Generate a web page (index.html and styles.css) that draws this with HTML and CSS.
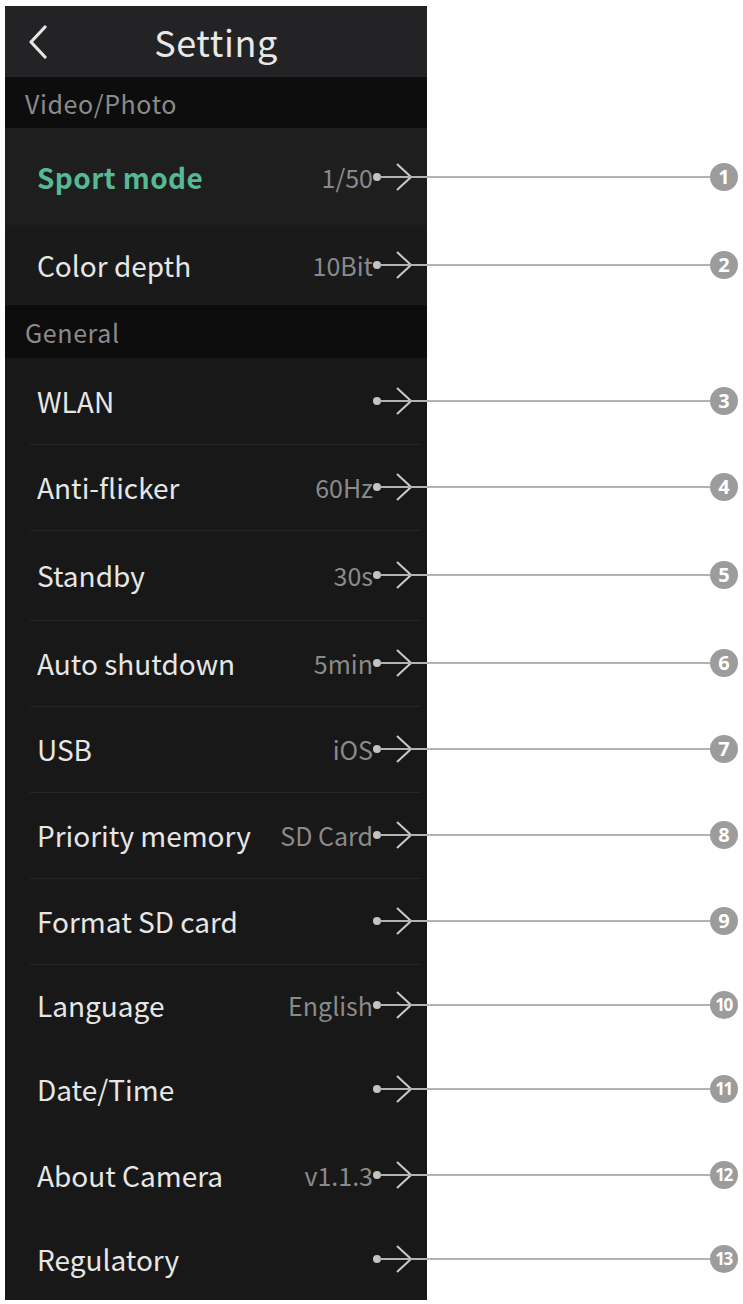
FILE: index.html
```html
<!DOCTYPE html>
<html lang="en">
<head>
<meta charset="utf-8">
<title>Setting</title>
<link rel="stylesheet" href="styles.css">
</head>
<body>
<div class="page">
  <div class="panel-head">
    <div class="back">
      <svg width="22" height="34" viewBox="0 0 22 34"><path d="M18 2 L4 17 L18 32" fill="none" stroke="#e6e6e6" stroke-width="3.2" stroke-linecap="round" stroke-linejoin="round"/></svg>
    </div>
    <div class="title">Setting</div>
    <div></div>
  </div>

  <div class="section"><span>Video/Photo</span></div>

  <div class="row sport">
    <div class="cell"><span class="label active">Sport mode</span><span class="value">1/50</span><svg class="chev" viewBox="0 0 16 28"><path d="M1 1 L15 14 L1 27" fill="none" stroke="#c9c9c9" stroke-width="2"/></svg></div>
    <div class="callout"><i class="dot"></i><i class="line"></i><b class="num">1</b></div>
  </div>
  <div class="row depth">
    <div class="cell"><span class="label">Color depth</span><span class="value">10Bit</span><svg class="chev" viewBox="0 0 16 28"><path d="M1 1 L15 14 L1 27" fill="none" stroke="#c9c9c9" stroke-width="2"/></svg></div>
    <div class="callout"><i class="dot"></i><i class="line"></i><b class="num">2</b></div>
  </div>

  <div class="section general"><span>General</span></div>

  <div class="row">
    <div class="cell"><span class="label">WLAN</span><span class="value"></span><svg class="chev" viewBox="0 0 16 28"><path d="M1 1 L15 14 L1 27" fill="none" stroke="#c9c9c9" stroke-width="2"/></svg></div>
    <div class="callout"><i class="dot"></i><i class="line"></i><b class="num">3</b></div>
  </div>
  <div class="row sep">
    <div class="cell"><span class="label">Anti-flicker</span><span class="value">60Hz</span><svg class="chev" viewBox="0 0 16 28"><path d="M1 1 L15 14 L1 27" fill="none" stroke="#c9c9c9" stroke-width="2"/></svg></div>
    <div class="callout"><i class="dot"></i><i class="line"></i><b class="num">4</b></div>
  </div>
  <div class="row sep tall">
    <div class="cell"><span class="label">Standby</span><span class="value">30s</span><svg class="chev" viewBox="0 0 16 28"><path d="M1 1 L15 14 L1 27" fill="none" stroke="#c9c9c9" stroke-width="2"/></svg></div>
    <div class="callout"><i class="dot"></i><i class="line"></i><b class="num">5</b></div>
  </div>
  <div class="row sep">
    <div class="cell"><span class="label">Auto shutdown</span><span class="value">5min</span><svg class="chev" viewBox="0 0 16 28"><path d="M1 1 L15 14 L1 27" fill="none" stroke="#c9c9c9" stroke-width="2"/></svg></div>
    <div class="callout"><i class="dot"></i><i class="line"></i><b class="num">6</b></div>
  </div>
  <div class="row sep">
    <div class="cell"><span class="label">USB</span><span class="value">iOS</span><svg class="chev" viewBox="0 0 16 28"><path d="M1 1 L15 14 L1 27" fill="none" stroke="#c9c9c9" stroke-width="2"/></svg></div>
    <div class="callout"><i class="dot"></i><i class="line"></i><b class="num">7</b></div>
  </div>
  <div class="row sep">
    <div class="cell"><span class="label">Priority memory</span><span class="value">SD Card</span><svg class="chev" viewBox="0 0 16 28"><path d="M1 1 L15 14 L1 27" fill="none" stroke="#c9c9c9" stroke-width="2"/></svg></div>
    <div class="callout"><i class="dot"></i><i class="line"></i><b class="num">8</b></div>
  </div>
  <div class="row sep">
    <div class="cell"><span class="label">Format SD card</span><span class="value"></span><svg class="chev" viewBox="0 0 16 28"><path d="M1 1 L15 14 L1 27" fill="none" stroke="#c9c9c9" stroke-width="2"/></svg></div>
    <div class="callout"><i class="dot"></i><i class="line"></i><b class="num">9</b></div>
  </div>
  <div class="row sep short">
    <div class="cell"><span class="label">Language</span><span class="value">English</span><svg class="chev" viewBox="0 0 16 28"><path d="M1 1 L15 14 L1 27" fill="none" stroke="#c9c9c9" stroke-width="2"/></svg></div>
    <div class="callout"><i class="dot"></i><i class="line"></i><b class="num two">10</b></div>
  </div>
  <div class="row">
    <div class="cell"><span class="label">Date/Time</span><span class="value"></span><svg class="chev" viewBox="0 0 16 28"><path d="M1 1 L15 14 L1 27" fill="none" stroke="#c9c9c9" stroke-width="2"/></svg></div>
    <div class="callout"><i class="dot"></i><i class="line"></i><b class="num two">11</b></div>
  </div>
  <div class="row">
    <div class="cell"><span class="label">About Camera</span><span class="value">v1.1.3</span><svg class="chev" viewBox="0 0 16 28"><path d="M1 1 L15 14 L1 27" fill="none" stroke="#c9c9c9" stroke-width="2"/></svg></div>
    <div class="callout"><i class="dot"></i><i class="line"></i><b class="num two">12</b></div>
  </div>
  <div class="row last">
    <div class="cell"><span class="label">Regulatory</span><span class="value"></span><svg class="chev" viewBox="0 0 16 28"><path d="M1 1 L15 14 L1 27" fill="none" stroke="#c9c9c9" stroke-width="2"/></svg></div>
    <div class="callout"><i class="dot"></i><i class="line"></i><b class="num two">13</b></div>
  </div>
</div>
</body>
</html>
```

FILE: styles.css
```css
* { box-sizing: border-box; }

html, body {
  margin: 0;
  padding: 0;
  background: #ffffff;
}

body {
  font-family: "Noto Sans CJK SC", "Noto Sans", sans-serif;
  width: 743px;
  height: 1304px;
  overflow: hidden;
}

.page {
  display: flex;
  flex-direction: column;
  padding: 6px 0 4px 5px;
  height: 1304px;
}

.panel-head {
  width: 422px;
  height: 71px;
  background: #232325;
  display: grid;
  grid-template-columns: 1fr auto 1fr;
  align-items: center;
}

.back {
  padding-left: 22px;
  display: flex;
  align-items: center;
}

.title {
  color: #e8e8e8;
  font-size: 36px;
  font-weight: 400;
  letter-spacing: 0.6px;
  line-height: 1;
  padding-bottom: 2px;
}

.section {
  width: 422px;
  height: 51px;
  background: #0d0d0e;
  display: flex;
  align-items: center;
  padding-left: 20px;
  color: #8b8b8b;
  font-size: 25px;
  letter-spacing: 0.6px;
}

.section.general {
  height: 53px;
}

.row {
  position: relative;
  display: flex;
  height: 86px;
  width: 738px;
}

.row.sport { height: 97px; }
.row.depth { height: 80px; }
.row.tall { height: 90px; }
.row.short { height: 82px; }
.row.last { flex: 1; height: auto; }

.cell {
  width: 422px;
  height: 100%;
  background: #181818;
  display: flex;
  align-items: center;
  padding: 0 15px 0 32px;
}

.row.sport .cell { background: #1e1e1f; }
.row.depth .cell { background: #1a1a1b; }

.row.sep .cell {
  background: linear-gradient(#262626, #262626) 25px 0 / 390px 1px no-repeat, #181818;
}

.label {
  flex: 1;
  color: #e6e6e6;
  font-size: 28px;
  font-weight: 400;
  letter-spacing: 0;
  white-space: nowrap;
}

.label.active {
  color: #57b994;
  font-weight: 700;
  letter-spacing: 0.4px;
}

.value {
  color: #8a8a8a;
  font-size: 25px;
  margin-right: 23px;
  white-space: nowrap;
}

.chev {
  width: 16px;
  height: 28px;
  flex: none;
}

/* annotation overlay: leader line + numbered marker */
.callout {
  position: absolute;
  left: 368px;
  right: 5px;
  top: 50%;
  height: 28px;
  margin-top: -14px;
  display: flex;
  align-items: center;
}

.dot {
  width: 8px;
  height: 8px;
  border-radius: 50%;
  background: #c4c4c4;
  flex: none;
}

.line {
  flex: 1;
  height: 2px;
  background: #b3b3b3;
  margin-left: -2px;
}

.num {
  width: 28px;
  height: 28px;
  border-radius: 50%;
  background: #9c9c9c;
  color: #ffffff;
  font-family: "Noto Sans", sans-serif;
  font-weight: 700;
  font-size: 20px;
  line-height: 28px;
  text-align: center;
  flex: none;
}

.num.two {
  font-size: 17px;
  letter-spacing: -1.5px;
  padding-right: 1px;
}
```
